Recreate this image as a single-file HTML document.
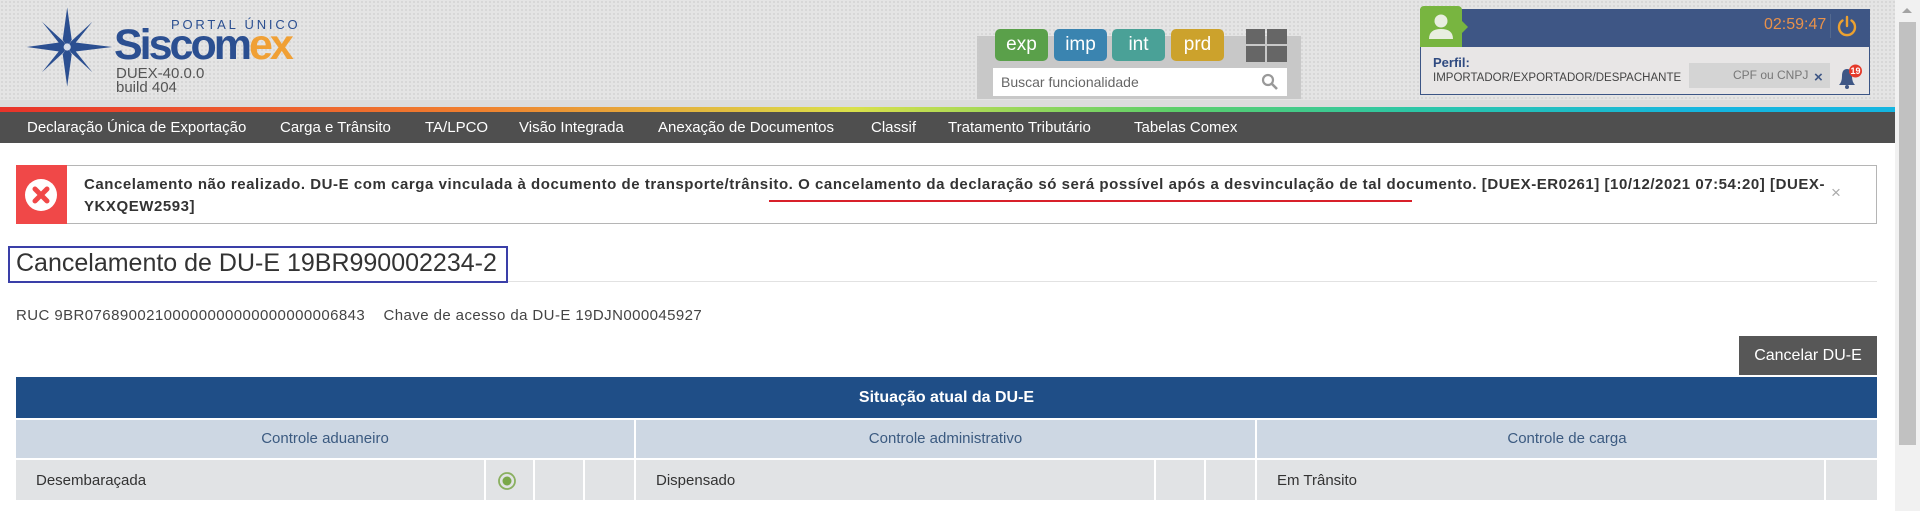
<!DOCTYPE html>
<html><head><meta charset="utf-8"><style>
*{box-sizing:border-box;margin:0;padding:0}
body{width:1920px;height:511px;overflow:hidden;background:#fff;font-family:"Liberation Sans",sans-serif;color:#333;position:relative}
.abs{position:absolute}
#hdr{left:0;top:0;width:1895px;height:107px;background:#e4e4e4;background-image:radial-gradient(#d6d6d6 1px,transparent 1.2px);background-size:4px 4px}
#hdrline{left:0;top:100px;width:1895px;height:7px;background:#dcdcdc}
#stripe{left:0;top:107px;width:1895px;height:5px;background:linear-gradient(90deg,#e8332a 0%,#f07f2e 25%,#d9e04a 45%,#5ccf6a 62%,#2ac6a8 75%,#14b5e0 90%,#14b5e0 100%)}
#nav{left:0;top:112px;width:1895px;height:31px;background:#4f4f4f}
#nav span{position:absolute;top:7px;color:#fff;font-size:15px;white-space:nowrap}
.btn{position:absolute;top:29px;width:53px;height:32px;border-radius:5px;color:#fff;font-size:19px;text-align:center;line-height:31px}
#sb{left:1895px;top:0;width:25px;height:511px;background:#f1f1f1}
</style></head><body>
<div id="hdr" class="abs"></div>
<div id="hdrline" class="abs"></div>
<div id="stripe" class="abs"></div>

<!-- logo -->
<svg class="abs" style="left:24px;top:2px" width="90" height="90" viewBox="0 0 100 92">
<g fill="#2b4f91">
<polygon points="48,2 53,38 48,46 43,38"/>
<polygon points="48,90 53,54 48,46 43,54"/>
<polygon points="3,46 39,41 48,46 39,51"/>
<polygon points="98,46 57,41 48,46 57,51"/>
<polygon points="20,18 44,40 48,46 40,43"/>
<polygon points="76,18 52,40 48,46 56,43"/>
<polygon points="20,74 44,52 48,46 40,49"/>
<polygon points="76,74 52,52 48,46 56,49"/>
</g>
<circle cx="48" cy="46" r="4" fill="#fff" opacity=".8"/>
</svg>
<div class="abs" style="left:171px;top:17px;font-size:13px;letter-spacing:2.8px;color:#2b4f91">PORTAL ÚNICO</div>
<div class="abs" style="left:114px;top:24px;font-size:43px;font-weight:bold;letter-spacing:-3px;color:#2b4f91;line-height:43px">Siscom<span style="color:#f0a035">ex</span></div>
<div class="abs" style="left:116px;top:67px;font-size:15px;color:#555;line-height:14px">DUEX-40.0.0<br>build 404</div>

<!-- profile buttons + search -->
<div class="abs" style="left:977px;top:36px;width:324px;height:63px;background:#c8c8c8"></div>
<div class="btn" style="left:995px;background:#5aa04a">exp</div>
<div class="btn" style="left:1054px;background:#3a84b0">imp</div>
<div class="btn" style="left:1112px;background:#4aa197">int</div>
<div class="btn" style="left:1171px;background:#cca22c">prd</div>
<div class="abs" style="left:1246px;top:29px;width:41px;height:33px">
<div class="abs" style="left:0;top:0;width:19px;height:15px;background:#666"></div>
<div class="abs" style="left:21px;top:0;width:20px;height:15px;background:#666"></div>
<div class="abs" style="left:0;top:17px;width:19px;height:16px;background:#666"></div>
<div class="abs" style="left:21px;top:17px;width:20px;height:16px;background:#666"></div>
</div>
<div class="abs" style="left:993px;top:68px;width:294px;height:28px;background:#fff;font-size:14px;color:#666;padding:6px 8px">Buscar funcionalidade</div>
<svg class="abs" style="left:1261px;top:73px" width="18" height="18" viewBox="0 0 18 18"><circle cx="7" cy="7" r="5" fill="none" stroke="#999" stroke-width="2.2"/><line x1="11" y1="11" x2="16" y2="16" stroke="#999" stroke-width="2.6"/></svg>

<!-- user panel -->
<div class="abs" style="left:1420px;top:9px;width:450px;height:86px;border:1px solid #3c5585;background:#e8e6e6"></div>
<div class="abs" style="left:1421px;top:10px;width:449px;height:37px;background:#3e5685"></div>
<div class="abs" style="left:1420px;top:6px;width:42px;height:41px;background:#78b540;border-radius:4px 4px 0 0"></div>
<div class="abs" style="left:1462px;top:21px;width:0;height:0;border-left:6px solid #78b540;border-top:6px solid transparent;border-bottom:6px solid transparent"></div>
<svg class="abs" style="left:1426px;top:12px" width="30" height="28" viewBox="0 0 30 28"><circle cx="15" cy="9" r="6.5" fill="#e8eee0"/><path d="M3 27 Q3 17 15 17 Q27 17 27 27 Z" fill="#e8eee0"/></svg>
<div class="abs" style="left:1764px;top:16px;font-size:16px;color:#e8914a">02:59:47</div>
<div class="abs" style="left:1830px;top:14px;width:1px;height:24px;background:#53698f"></div>
<svg class="abs" style="left:1836px;top:15px" width="22" height="22" viewBox="0 0 22 22"><path d="M6.5 5.5 A8 8 0 1 0 15.5 5.5" fill="none" stroke="#eca130" stroke-width="2.4" stroke-linecap="round"/><line x1="11" y1="2" x2="11" y2="11" stroke="#eca130" stroke-width="2.4" stroke-linecap="round"/></svg>
<div class="abs" style="left:1433px;top:55px;font-size:13px;font-weight:bold;color:#2f4a80">Perfil:</div>
<div class="abs" style="left:1433px;top:72px;font-size:11.5px;color:#444">IMPORTADOR/EXPORTADOR/DESPACHANTE</div>
<div class="abs" style="left:1689px;top:63px;width:141px;height:25px;background:#d4d4d4"></div>
<div class="abs" style="left:1733px;top:68px;font-size:12px;color:#777">CPF ou CNPJ</div>
<div class="abs" style="left:1814px;top:69px;font-size:15px;font-weight:bold;color:#3e5685">×</div>
<svg class="abs" style="left:1836px;top:64px" width="28" height="26" viewBox="0 0 28 26"><path d="M3 21 Q6 18 6 12 Q6 5 11 5 Q16 5 16 12 Q16 18 19 21 Z" fill="#3e5685"/><circle cx="11" cy="23" r="2" fill="#3e5685"/><circle cx="19.5" cy="7" r="6.5" fill="#e53a2a"/><text x="19.5" y="10" font-size="9" font-weight="bold" fill="#fff" text-anchor="middle" font-family="Liberation Sans">19</text></svg>

<!-- nav -->
<div id="nav" class="abs">
<span style="left:27px">Declaração Única de Exportação</span>
<span style="left:280px">Carga e Trânsito</span>
<span style="left:425px">TA/LPCO</span>
<span style="left:519px">Visão Integrada</span>
<span style="left:658px">Anexação de Documentos</span>
<span style="left:871px">Classif</span>
<span style="left:948px">Tratamento Tributário</span>
<span style="left:1134px">Tabelas Comex</span>
</div>

<!-- alert -->
<div class="abs" style="left:16px;top:165px;width:1861px;height:59px;border:1px solid #b5b5b5;background:#fff"></div>
<div class="abs" style="left:16px;top:165px;width:51px;height:59px;background:#f04848"></div>
<svg class="abs" style="left:24px;top:178px" width="34" height="34" viewBox="0 0 34 34"><circle cx="17" cy="17" r="16" fill="#fff"/><path d="M11 11 L23 23 M23 11 L11 23" stroke="#f04848" stroke-width="5" stroke-linecap="round"/></svg>
<div class="abs" style="left:84px;top:174px;width:1750px;font-size:15px;font-weight:bold;line-height:22px;letter-spacing:0.55px;color:#333">Cancelamento não realizado. DU-E com carga vinculada à documento de transporte/trânsito. O cancelamento da declaração só será possível após a desvinculação de tal documento. [DUEX-ER0261] [10/12/2021 07:54:20] [DUEX-YKXQEW2593]</div>
<div class="abs" style="left:769px;top:200px;width:643px;height:2px;background:#d8202a"></div>
<div class="abs" style="left:1831px;top:183px;font-size:17px;color:#aaa">×</div>

<!-- title -->
<div class="abs" style="left:16px;top:281px;width:1861px;height:1px;background:#e2e2e2"></div>
<div class="abs" style="left:8px;top:246px;width:500px;height:37px;border:2px solid #3a3fa8;background:#fff"></div>
<div class="abs" style="left:16px;top:249px;font-size:25px;color:#333">Cancelamento de DU-E 19BR990002234-2</div>

<div class="abs" style="left:16px;top:307px;font-size:15px;color:#444;letter-spacing:0.42px">RUC 9BR07689002100000000000000000006843&nbsp;&nbsp;&nbsp;&nbsp;Chave de acesso da DU-E 19DJN000045927</div>

<div class="abs" style="left:1739px;top:336px;width:138px;height:39px;background:#575757;color:#fff;font-size:16px;text-align:center;line-height:40px">Cancelar DU-E</div>

<!-- table -->
<div class="abs" style="left:16px;top:377px;width:1861px;height:41px;background:#1f4e87;color:#fff;font-weight:bold;font-size:16px;text-align:center;line-height:41px">Situação atual da DU-E</div>
<div class="abs" style="left:16px;top:420px;width:1861px;height:38px;background:#cdd7e3"></div>
<div class="abs" style="left:16px;top:460px;width:1861px;height:40px;background:#e1e3e5"></div>
<div class="abs" style="left:16px;top:418px;width:1861px;height:2px;background:#fff"></div>
<div class="abs" style="left:16px;top:458px;width:1861px;height:2px;background:#fff"></div>
<div class="abs" style="left:634px;top:420px;width:2px;height:80px;background:#fff"></div>
<div class="abs" style="left:1255px;top:420px;width:2px;height:80px;background:#fff"></div>
<div class="abs" style="left:484px;top:460px;width:2px;height:40px;background:#fff"></div>
<div class="abs" style="left:533px;top:460px;width:2px;height:40px;background:#fff"></div>
<div class="abs" style="left:583px;top:460px;width:2px;height:40px;background:#fff"></div>
<div class="abs" style="left:1154px;top:460px;width:2px;height:40px;background:#fff"></div>
<div class="abs" style="left:1204px;top:460px;width:2px;height:40px;background:#fff"></div>
<div class="abs" style="left:1824px;top:460px;width:2px;height:40px;background:#fff"></div>
<div class="abs" style="left:16px;top:430px;width:618px;text-align:center;font-size:15px;color:#3b5a80">Controle aduaneiro</div>
<div class="abs" style="left:636px;top:430px;width:619px;text-align:center;font-size:15px;color:#3b5a80">Controle administrativo</div>
<div class="abs" style="left:1257px;top:430px;width:620px;text-align:center;font-size:15px;color:#3b5a80">Controle de carga</div>
<div class="abs" style="left:36px;top:472px;font-size:15px;color:#333">Desembaraçada</div>
<div class="abs" style="left:656px;top:472px;font-size:15px;color:#333">Dispensado</div>
<div class="abs" style="left:1277px;top:472px;font-size:15px;color:#333">Em Trânsito</div>
<svg class="abs" style="left:497px;top:471px" width="20" height="20" viewBox="0 0 20 20"><circle cx="10" cy="10" r="8" fill="none" stroke="#8ab060" stroke-width="1.8"/><circle cx="10" cy="10" r="4.5" fill="#7aa84a"/></svg>

<!-- scrollbar -->
<div id="sb" class="abs"></div>
<div class="abs" style="left:1899px;top:22px;width:17px;height:423px;background:#c1c1c1"></div>
<div class="abs" style="left:1902px;top:8px;width:0;height:0;border-left:5px solid transparent;border-right:5px solid transparent;border-bottom:5px solid #a3a3a3"></div>
</body></html>
